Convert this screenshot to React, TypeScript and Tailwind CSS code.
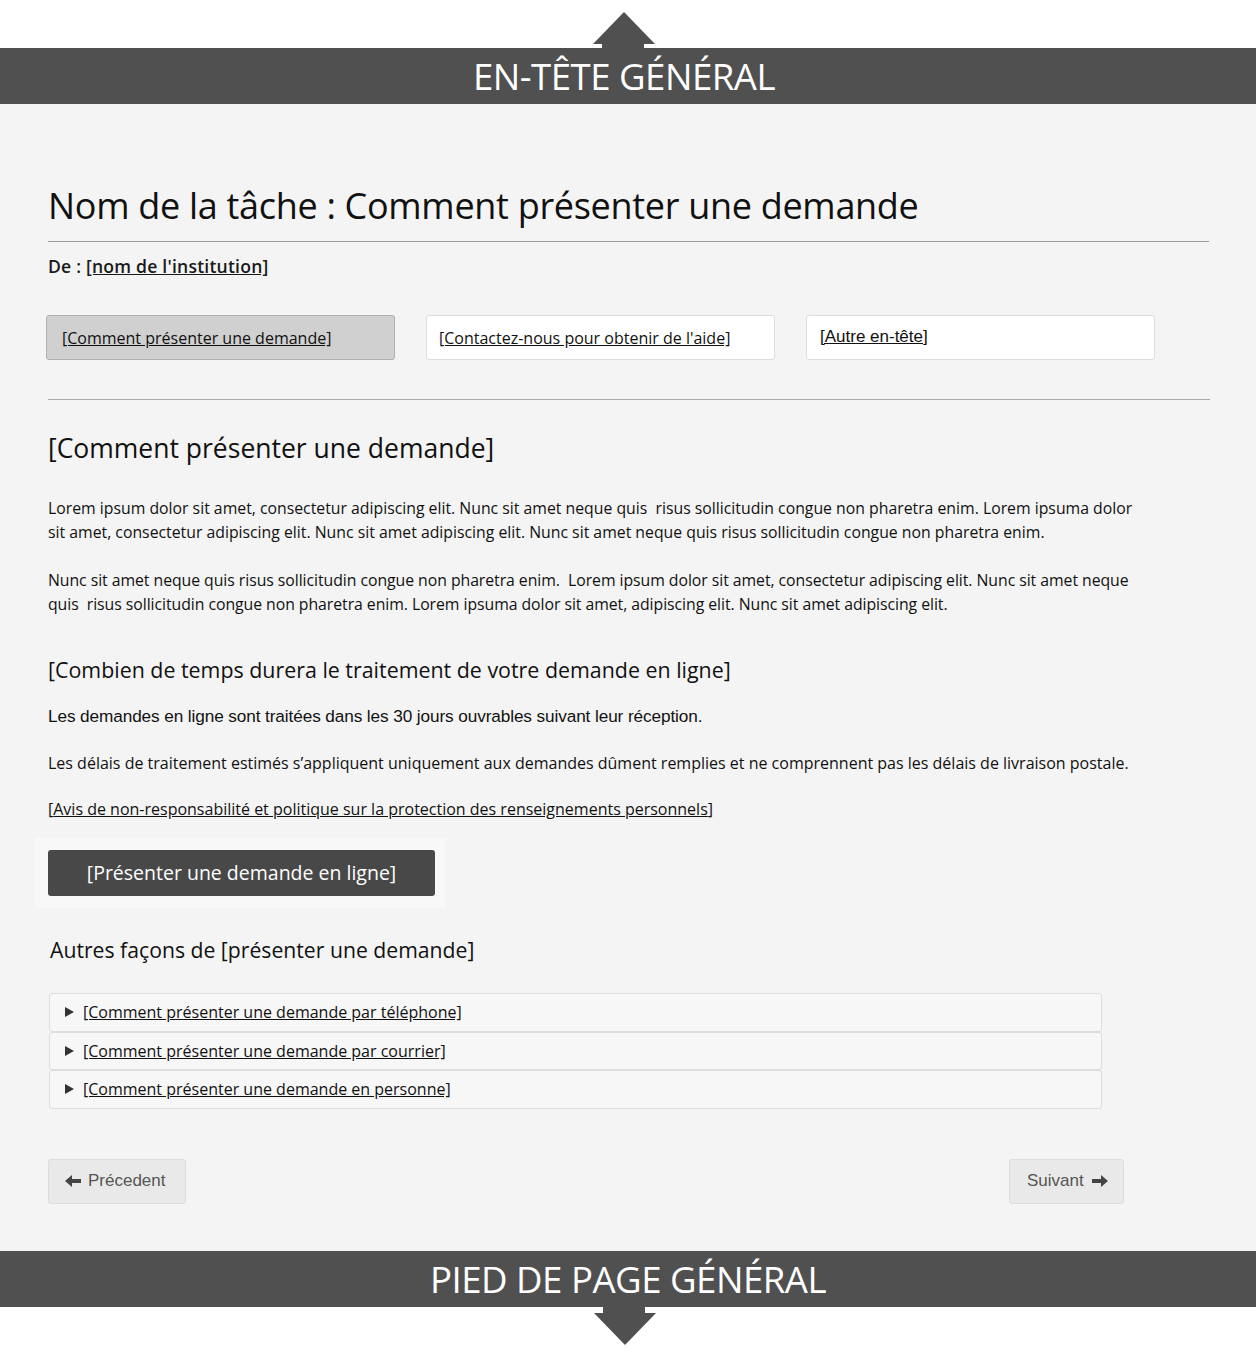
import React from "react";

const F = { fontFamily: '"Open Sans", "Liberation Sans", sans-serif' };
const A = { fontFamily: '"Liberation Sans", Arial, sans-serif' };

function Tri() {
  return (
    <svg width="9" height="10" viewBox="0 0 9 10" className="shrink-0">
      <polygon points="0,0 9,5 0,10" fill="#333" />
    </svg>
  );
}

export default function App() {
  return (
    <div className="w-[1256px] h-[1354px] bg-white text-[#111]" style={F}>
      {/* top */}
      <div className="h-[48px] flex justify-center items-end pr-[8px]">
        <svg width="62" height="36" viewBox="0 0 62 36">
          <polygon points="31,0 62,32 51,32 51,36 9,36 9,32 0,32" fill="#505050" />
        </svg>
      </div>
      <div className="h-[56px] bg-[#505050] flex items-center justify-center pr-[8px]">
        <span className="text-white text-[36.6px] tracking-[-0.5px] leading-none">EN-TÊTE GÉNÉRAL</span>
      </div>

      <main className="bg-[#f4f4f4] h-[1147px] px-[48px] pt-[80px]">
        <h1 className="text-[36px] leading-[44px] tracking-[-0.3px] text-[#111]">
          Nom de la tâche : Comment présenter une demande
        </h1>
        <div className="mt-[13px] h-px bg-[#999] w-[1161px]" />
        <div className="mt-[12px] text-[17.6px] font-semibold leading-[24px] tracking-[0.2px] text-[#1a1a1a]">
          De : <span className="underline">[nom de l'institution]</span>
        </div>

        <div className="mt-[37px] flex gap-[31px] -ml-[2px]">
          <div className="w-[349px] h-[45px] rounded-[3px] bg-[#d0d0d0] border border-[#b0b0b0] flex items-center pl-[15px] text-[16px]">
            <span className="underline">[Comment présenter une demande]</span>
          </div>
          <div className="w-[349px] h-[45px] rounded-[3px] bg-white border border-[#ddd] flex items-center pl-[12px] text-[16px]">
            <span className="underline">[Contactez-nous pour obtenir de l'aide]</span>
          </div>
          <div className="w-[349px] h-[45px] rounded-[3px] bg-white border border-[#ddd] flex items-center pl-[13px] text-[17px] pb-[2px]" style={A}>
            <span className="underline">[Autre en-tête]</span>
          </div>
        </div>

        <div className="mt-[39px] h-px bg-[#aaa] w-[1162px]" />

        <h2 className="mt-[30px] text-[26.5px] leading-[36px]">[Comment présenter une demande]</h2>

        <p className="mt-[30px] text-[15.8px] leading-[24px] whitespace-nowrap">
          Lorem ipsum dolor sit amet, consectetur adipiscing elit. Nunc sit amet neque quis&nbsp; risus sollicitudin congue non pharetra enim. Lorem ipsuma dolor
          <br />
          sit amet, consectetur adipiscing elit. Nunc sit amet adipiscing elit. Nunc sit amet neque quis risus sollicitudin congue non pharetra enim.
        </p>
        <p className="mt-[24px] text-[15.8px] leading-[24px] whitespace-nowrap tracking-[-0.05px]">
          Nunc sit amet neque quis risus sollicitudin congue non pharetra enim.&nbsp; Lorem ipsum dolor sit amet, consectetur adipiscing elit. Nunc sit amet neque
          <br />
          quis&nbsp; risus sollicitudin congue non pharetra enim. Lorem ipsuma dolor sit amet, adipiscing elit. Nunc sit amet adipiscing elit.
        </p>

        <h3 className="mt-[39px] text-[21.4px] leading-[30px]">[Combien de temps durera le traitement de votre demande en ligne]</h3>
        <p className="mt-[19px] text-[17.2px] leading-[24px] tracking-[-0.1px]" style={A}>
          Les demandes en ligne sont traitées dans les 30 jours ouvrables suivant leur réception.
        </p>
        <p className="mt-[23px] text-[16px] leading-[24px] whitespace-nowrap">
          Les délais de traitement estimés s’appliquent uniquement aux demandes dûment remplies et ne comprennent pas les délais de livraison postale.
        </p>
        <p className="mt-[22px] text-[16px] leading-[24px]">
          [<span className="underline">Avis de non-responsabilité et politique sur la protection des renseignements personnels</span>]
        </p>

        <div className="mt-[17px] -ml-[13px] w-[411px] p-[12px] pl-[13px] bg-[#f8f8f8]">
          <div className="w-[387px] h-[46px] rounded-[3px] bg-[#484848] flex items-center justify-center text-white text-[19.5px]">
            [Présenter une demande en ligne]
          </div>
        </div>

        <h3 className="mt-[27px] ml-[2px] text-[21.2px] leading-[30px]">Autres façons de [présenter une demande]</h3>

        <div className="mt-[28px] ml-[1px] w-[1053px] flex flex-col">
          {[
            "[Comment présenter une demande par téléphone]",
            "[Comment présenter une demande par courrier]",
            "[Comment présenter une demande en personne]",
          ].map((t, i) => (
            <div
              key={i}
              className="h-[38.5px] bg-[#f7f7f7] border border-[#ddd] rounded-[3px] flex items-center pl-[15px] gap-[9px] text-[16px]"
            >
              <Tri />
              <span className="underline">{t}</span>
            </div>
          ))}
        </div>

        <div className="mt-[50px] w-[1076px] flex justify-between" style={A}>
          <div className="w-[138px] h-[45px] rounded-[3px] bg-[#e9e9e9] border border-[#ddd] flex items-center pl-[16px] gap-[7px] text-[17px] text-[#555]">
            <svg width="16" height="12" viewBox="0 0 16 12">
              <polygon points="0,6 7,0 7,4 16,4 16,8 7,8 7,12" fill="#444" />
            </svg>
            Précedent
          </div>
          <div className="w-[115px] h-[45px] rounded-[3px] bg-[#e9e9e9] border border-[#ddd] flex items-center pl-[17px] gap-[8px] text-[17px] text-[#555]">
            Suivant
            <svg width="16" height="12" viewBox="0 0 16 12">
              <polygon points="16,6 9,0 9,4 0,4 0,8 9,8 9,12" fill="#444" />
            </svg>
          </div>
        </div>
      </main>

      <div className="h-[56px] bg-[#505050] flex items-center justify-center">
        <span className="text-white text-[36.6px] tracking-[-0.5px] leading-none">PIED DE PAGE GÉNÉRAL</span>
      </div>
      <div className="h-[48px] flex justify-center items-start pr-[6px]">
        <svg width="62" height="38" viewBox="0 0 62 38">
          <polygon points="9,0 51,0 51,6 62,6 31,38 0,6 9,6" fill="#505050" />
        </svg>
      </div>
    </div>
  );
}
